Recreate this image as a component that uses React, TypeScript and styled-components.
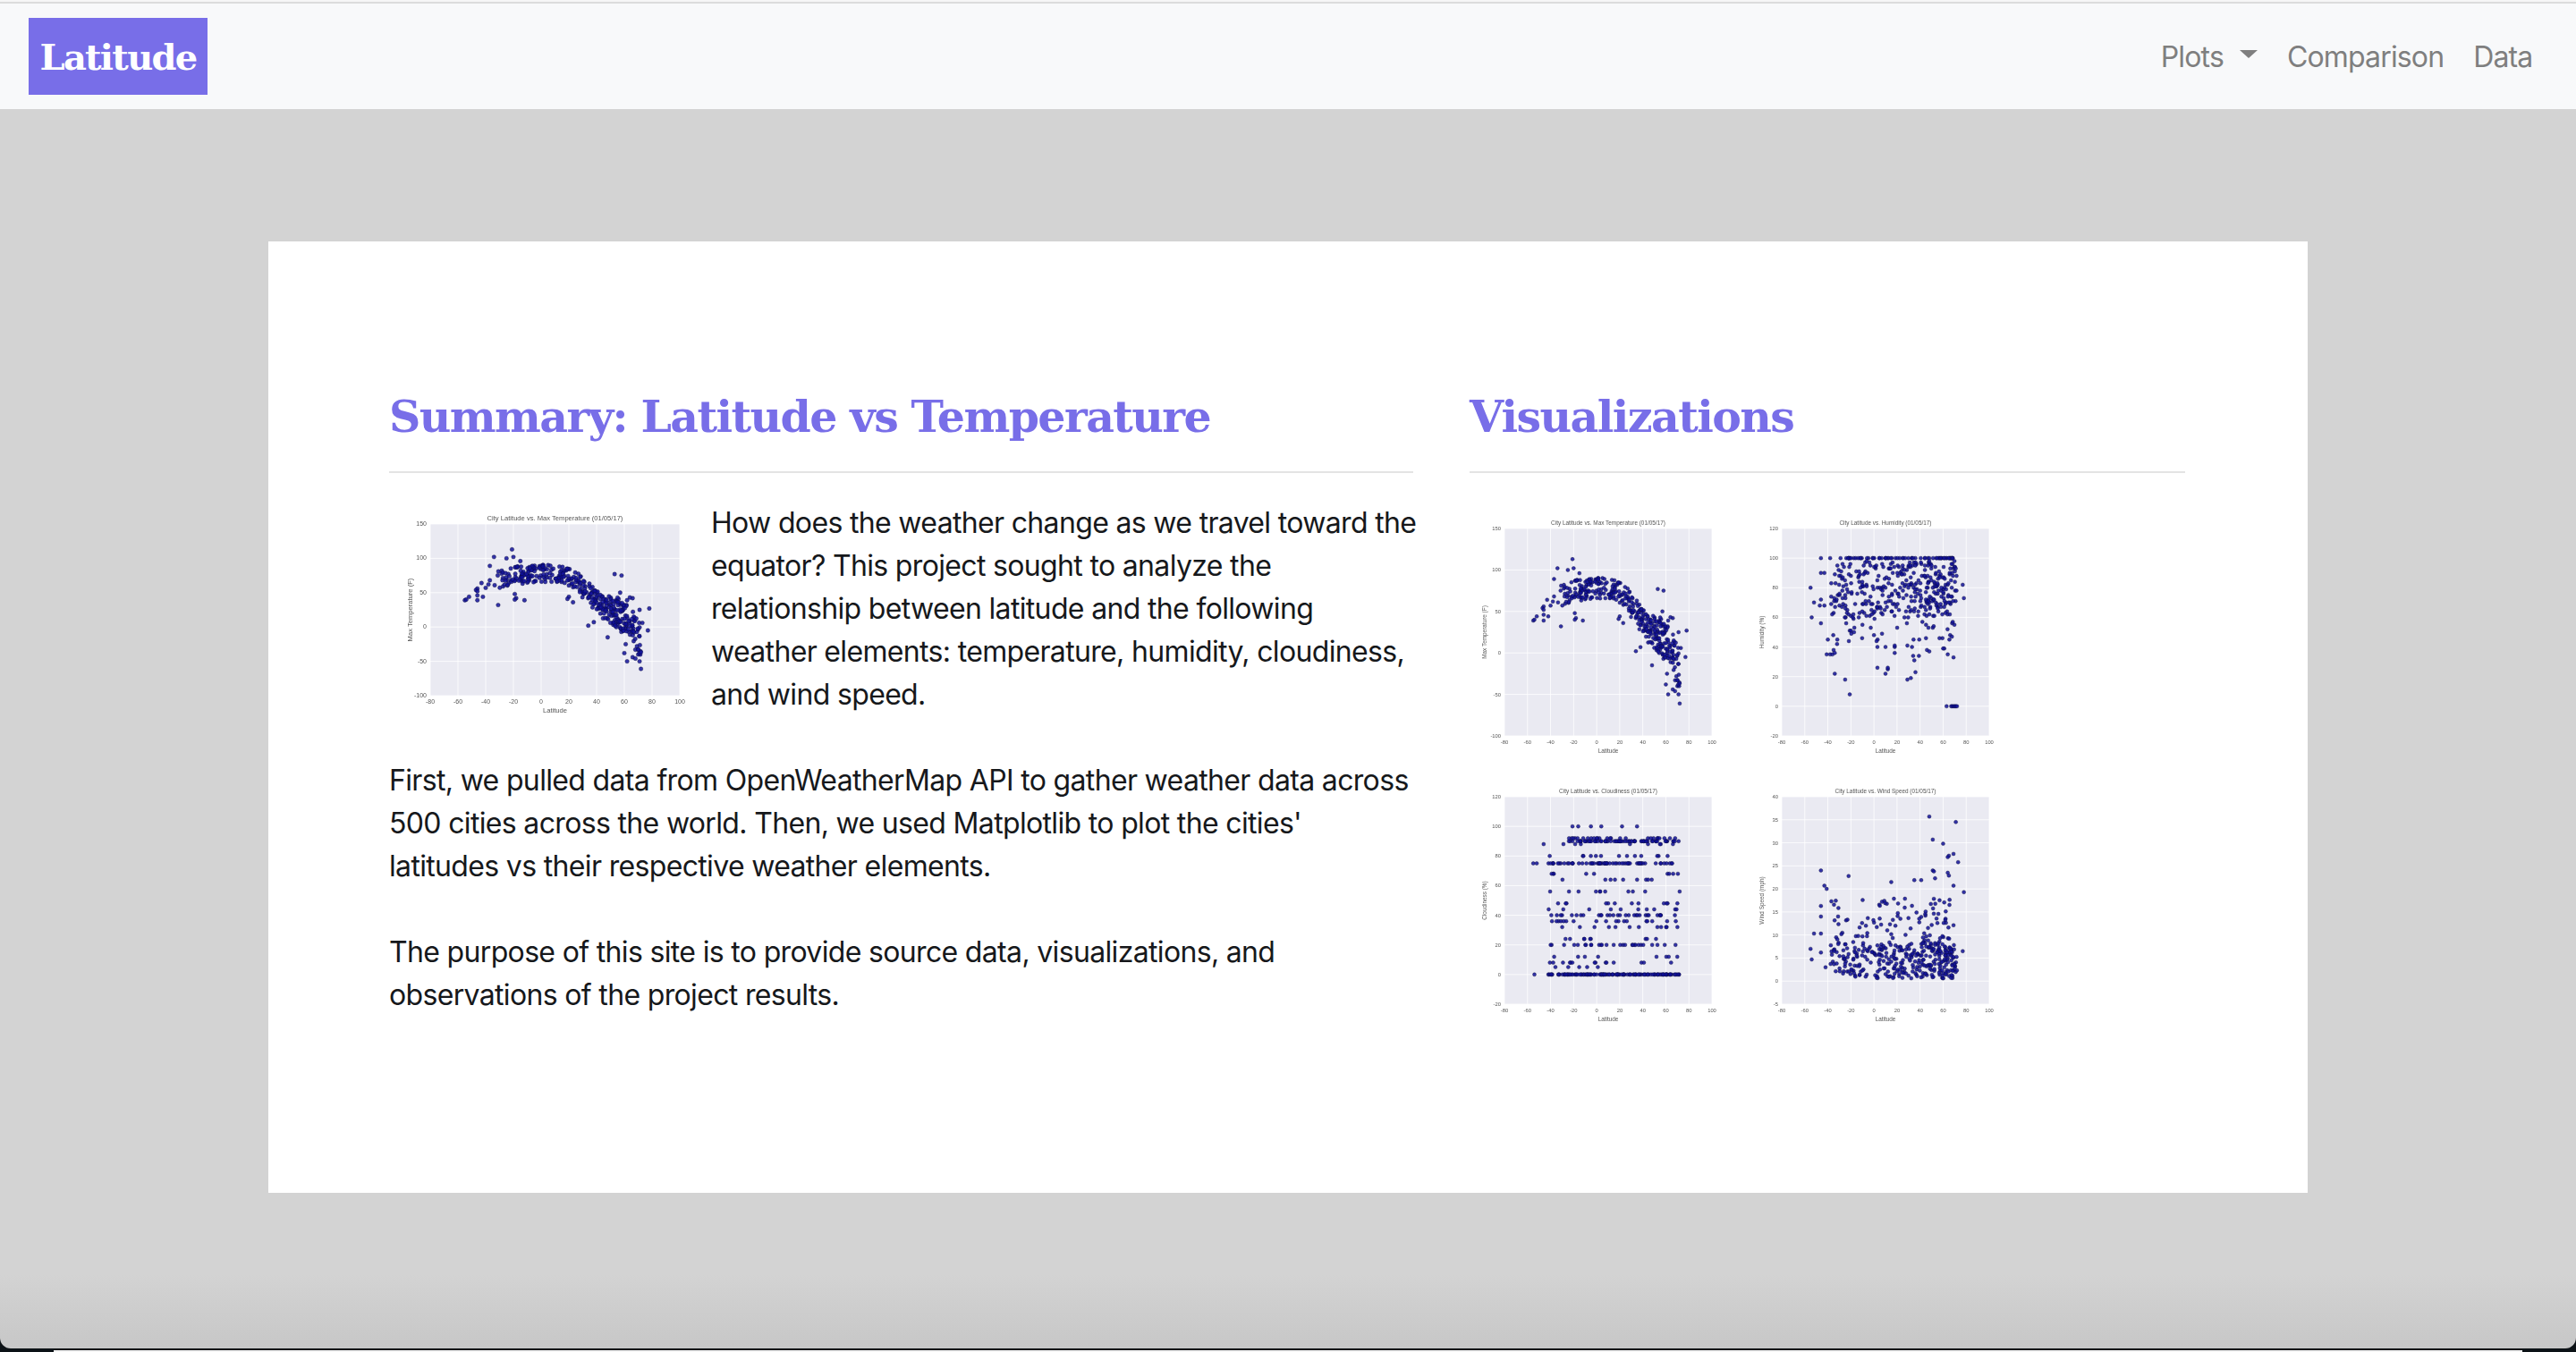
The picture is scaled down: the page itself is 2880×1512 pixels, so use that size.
import React from 'react';
import styled, { createGlobalStyle } from 'styled-components';

const GlobalStyle = createGlobalStyle`
  html, body {
    margin: 0;
    padding: 0;
    background: #0c1216;
  }
`;

const Page = styled.div`
  height: 1508px;
  display: flex;
  flex-direction: column;
  overflow: hidden;
  border-radius: 0 0 12px 12px;
  font-family: Inter, 'Noto Sans', sans-serif;
  letter-spacing: -0.66px;
  background: linear-gradient(to bottom, #d3d3d3 94.5%, #c7c7c7 100%);
`;

const BottomEdge = styled.div`
  height: 2px;
  margin: 2px 60px 0;
  background: #f4f4f4;
`;

const Navbar = styled.nav`
  height: 118px;
  margin-top: 4px;
  padding: 0 32px;
  display: flex;
  align-items: center;
  justify-content: space-between;
  background: #f8f9fa;
  box-shadow: 0 -2px 0 #dcdcdc, 0 -4px 0 #f6f6f6;
`;

const Brand = styled.a`
  width: 200px;
  height: 86px;
  display: flex;
  align-items: center;
  justify-content: center;
  background: #786ee8;
  color: #fff;
  font-family: 'DejaVu Serif', serif;
  font-weight: 700;
  font-size: 40px;
  letter-spacing: -1.7px;
`;

const NavList = styled.div`
  display: flex;
  align-items: center;
`;

const NavLink = styled.a`
  padding: 2px 16.5px 0;
  display: flex;
  align-items: center;
  color: #7f7f7f;
  font-size: 32px;
  line-height: 48px;
  letter-spacing: -0.85px;
`;

const Caret = styled.span`
  margin-left: 18px;
  margin-bottom: 8px;
  border-top: 9px solid #7f7f7f;
  border-left: 10px solid transparent;
  border-right: 10px solid transparent;
`;

const Panel = styled.main`
  margin: 148px 300px 0;
  height: 1064px;
  padding: 150px 137px 0 135px;
  box-sizing: border-box;
  background: #fff;
  display: grid;
  grid-template-columns: 1145px 800px;
  column-gap: 63px;
  align-items: start;
`;

const Heading = styled.h2`
  margin: 0;
  height: 94px;
  padding-top: 13px;
  border-bottom: 2px solid #e3e3e3;
  color: #786ee8;
  font-family: 'DejaVu Serif', serif;
  font-weight: 700;
  font-size: 49px;
  line-height: 66px;
  letter-spacing: -1.6px;
`;

const Body = styled.div`
  padding-top: 32px;
  color: #16181b;
  font-size: 32px;
  line-height: 48px;
`;

const Paragraph = styled.p<{ $overhang?: boolean }>`
  margin: 0 ${(p) => (p.$overhang ? '-9px' : '0')} 48px 0;
`;

const Thumb = styled.div`
  float: left;
  width: 340px;
  height: 260px;
  margin-right: 20px;
`;

const Gallery = styled.div`
  padding-top: 34px;
  display: grid;
  grid-template-columns: 310px 310px;
  grid-auto-rows: 300px;
`;

type Point = [number, number];

// small seeded generator so the scatter stays the same between runs
const makeRandom = (seed: number) => () => {
  seed = (seed * 1664525 + 1013904223) % 4294967296;
  return seed / 4294967296;
};

const interpolate = (table: Point[], x: number) => {
  for (let i = 1; i < table.length; i++) {
    if (x <= table[i][0]) {
      const [x0, y0] = table[i - 1];
      const [x1, y1] = table[i];
      return y0 + ((y1 - y0) * (x - x0)) / (x1 - x0);
    }
  }
  return table[table.length - 1][1];
};

const randomLat = (r: () => number, from = -38) => {
  const v = r();
  if (v < 0.45) return 20 + r() * 52;
  if (v < 0.6) return 40 + r() * 32;
  return from + r() * (20 - from);
};

const tempCurve: Point[] = [
  [-40, 62], [-30, 70], [-20, 75], [0, 78], [15, 78], [25, 66],
  [35, 47], [45, 27], [55, 20], [65, 4], [72, -20],
];

const temperature = (): Point[] => {
  const r = makeRandom(11);
  const pts: Point[] = [
    [-55, 39], [-54, 40], [-52, 44], [-46, 56], [-47, 54], [-46, 52], [-46, 46], [-46, 39],
    [-43, 64], [-42, 44], [-40, 57], [-38, 62], [-37, 68], [-37, 89], [-34, 102], [-31, 32],
    [-25, 100], [-20, 102], [-21, 113], [-19, 48], [-18, 42], [-19, 40], [-12, 39], [-15, 96],
    [53, 77], [58, 75], [57, 50], [78, 27], [77, -5], [72, -61], [71, -50], [34, 2], [38, 7],
    [48, -15], [73, 6], [71, 25], [66, 42], [64, 43], [62, 39], [20, 44], [19, 41], [23, 36],
    [62, -50], [66, -44], [68, -46], [70, -40], [68, -33], [60, -38], [61, -25],
  ];
  for (let i = 0; i < 370; i++) {
    const lat = randomLat(r, -35);
    const spread = lat > 48 ? 46 : lat > 25 ? 32 : 26;
    pts.push([lat, interpolate(tempCurve, lat) + (r() - 0.5) * spread]);
  }
  return pts;
};

const humidity = (): Point[] => {
  const r = makeRandom(29);
  const pts: Point[] = [
    [-55, 80], [-52, 70], [-54, 60], [-46, 100], [-46, 90], [-46, 72], [-47, 68], [-46, 56], [-43, 90],
    [-43, 68], [-40, 45], [-41, 35], [-38, 35], [-36, 35], [-35, 38], [-34, 36], [-32, 42],
    [-34, 22], [-25, 18], [-21, 8], [-21, 51], [-20, 51], [-17, 53], [-10, 55], [0, 48],
    [3, 26], [3, 40], [7, 49], [10, 40], [10, 22], [12, 25], [12, 26], [18, 36], [18, 40],
    [18, 41], [29, 18], [32, 19], [36, 23], [35, 31], [34, 34], [33, 40], [29, 41], [39, 34],
    [46, 38], [48, 37], [61, 39], [60, 39], [64, 35], [69, 33], [78, 73], [77, 82],
    [63, 0], [67, 0], [68, 0], [69, 0], [70, 0], [71, 0], [72, 0], [-38, 100], [-29, 100],
  ];
  for (let i = 0; i < 65; i++) pts.push([-25 + r() * 97, 100]);
  for (let i = 0; i < 380; i++) {
    const lat = randomLat(r);
    const val = r() < 0.9 ? 60 + r() * 38 : 44 + r() * 16;
    pts.push([lat, Math.round(val)]);
  }
  return pts;
};

const cloudiness = (): Point[] => {
  const r = makeRandom(47);
  const rows: [number, number][] = [
    [0, 120], [5, 5], [8, 14], [12, 8], [20, 28], [24, 9], [32, 12], [36, 18], [40, 30], [44, 10],
    [48, 12], [56, 11], [64, 9], [68, 9], [75, 62], [80, 13], [88, 8], [90, 70], [92, 26],
  ];
  const pts: Point[] = [[-21, 100], [-16, 100], [-5, 100], [4, 100], [22, 100], [35, 100], [-46, 88], [-55, 75], [-52, 75], [-54, 0]];
  rows.forEach(([val, count]) => {
    for (let i = 0; i < count; i++) {
      const from = val === 90 || val === 92 ? -25 : -42;
      pts.push([from + r() * (72 - from), val]);
    }
  });
  return pts;
};

const windSpeed = (): Point[] => {
  const r = makeRandom(83);
  const pts: Point[] = [
    [48, 35.7], [71, 34.5], [51, 30.7], [60, 29.8], [69, 27.6], [65, 27.2], [64, 26.9], [73, 25.8],
    [-46, 24], [51, 24], [52, 23.8], [64, 23.5], [65, 22.9], [-22, 22.8], [53, 22.3], [35, 21.9],
    [41, 21.9], [15, 21.5], [-43, 20.7], [-41, 20], [69, 20.7], [78, 19.3], [-55, 7], [-54, 4.7],
    [-52, 10.3], [-46, 16.3], [-46, 14], [-46, 10.3], [-46, 6.2], [-42, 3], [77, 6.5],
  ];
  for (let i = 0; i < 420; i++) {
    const lat = randomLat(r, -38);
    const val = r() < 0.66 ? 0.6 + r() * 7.4 : 6 + r() * 12;
    pts.push([lat, val]);
  }
  return pts;
};

interface ChartProps {
  title: string;
  yLabel: string;
  yMin: number;
  yMax: number;
  yStep: number;
  points: Point[];
  wide?: boolean;
}

const ticks = (min: number, max: number, step: number) => {
  const out: number[] = [];
  for (let v = min; v <= max; v += step) out.push(v);
  return out;
};

const Chart = ({ title, yLabel, yMin, yMax, yStep, points, wide }: ChartProps) => {
  const w = wide ? 340 : 310;
  const h = wide ? 260 : 300;
  const left = wide ? 46 : 39;
  const top = wide ? 25 : 28;
  const pw = wide ? 279 : 232;
  const ph = wide ? 192 : 232;
  const sx = (v: number) => left + ((v + 80) / 180) * pw;
  const sy = (v: number) => top + ((yMax - v) / (yMax - yMin)) * ph;
  const filterId = `soft-${title.length}-${w}`;
  const font = wide ? 7.6 : 6.4;
  return (
    <svg width={w} height={h} viewBox={`0 0 ${w} ${h}`} fontFamily="'Liberation Sans', sans-serif" fill="#555" letterSpacing="0">
      <defs>
        <filter id={filterId} x="-5%" y="-5%" width="110%" height="110%">
          <feGaussianBlur stdDeviation={wide ? 0.35 : 0.5} />
        </filter>
      </defs>
      <g filter={`url(#${filterId})`}>
        <rect x={left} y={top} width={pw} height={ph} fill="#eaeaf2" />
        {ticks(-80, 100, 20).map((v) => (
          <line key={v} x1={sx(v)} x2={sx(v)} y1={top} y2={top + ph} stroke="#fff" strokeWidth={0.8} />
        ))}
        {ticks(yMin, yMax, yStep).map((v) => (
          <line key={v} x1={left} x2={left + pw} y1={sy(v)} y2={sy(v)} stroke="#fff" strokeWidth={0.8} />
        ))}
        {points.map(([x, y], i) => (
          <circle key={i} cx={sx(x)} cy={sy(y)} r={wide ? 2.2 : 2} fill="#12129a" fillOpacity={0.85} stroke="#0a0a3a" strokeWidth={0.4} />
        ))}
        <text x={left + pw / 2} y={top - 4} textAnchor="middle" fontSize={font}>{title}</text>
        {ticks(-80, 100, 20).map((v) => (
          <text key={v} x={sx(v)} y={top + ph + 9} textAnchor="middle" fontSize={font - 0.6}>{v}</text>
        ))}
        {ticks(yMin, yMax, yStep).map((v) => (
          <text key={v} x={left - 4} y={sy(v) + 2} textAnchor="end" fontSize={font - 0.6}>{v}</text>
        ))}
        <text x={left + pw / 2} y={top + ph + 19} textAnchor="middle" fontSize={font}>Latitude</text>
        <text
          transform={`translate(${left - 20} ${top + ph / 2}) rotate(-90)`}
          textAnchor="middle"
          fontSize={font}
        >
          {yLabel}
        </text>
      </g>
    </svg>
  );
};

const tempPoints = temperature();
const humidityPoints = humidity();
const cloudPoints = cloudiness();
const windPoints = windSpeed();

const tempTitle = 'City Latitude vs. Max Temperature (01/05/17)';

export default function App() {
  return (
    <>
      <GlobalStyle />
      <Page>
        <Navbar>
          <Brand>Latitude</Brand>
          <NavList>
            <NavLink>Plots<Caret /></NavLink>
            <NavLink>Comparison</NavLink>
            <NavLink>Data</NavLink>
          </NavList>
        </Navbar>
        <Panel>
          <section>
            <Heading>Summary: Latitude vs Temperature</Heading>
            <Body>
              <Thumb>
                <Chart wide title={tempTitle} yLabel="Max Temperature (F)" yMin={-100} yMax={150} yStep={50} points={tempPoints} />
              </Thumb>
              <Paragraph $overhang>
                How does the weather change as we travel toward the equator? This project sought to analyze the relationship between latitude and the following weather elements: temperature, humidity, cloudiness, and wind speed.
              </Paragraph>
              <Paragraph>
                First, we pulled data from OpenWeatherMap API to gather weather data across 500 cities across the world. Then, we used Matplotlib to plot the cities' latitudes vs their respective weather elements.
              </Paragraph>
              <Paragraph>
                The purpose of this site is to provide source data, visualizations, and observations of the project results.
              </Paragraph>
            </Body>
          </section>
          <section>
            <Heading>Visualizations</Heading>
            <Gallery>
              <Chart title={tempTitle} yLabel="Max Temperature (F)" yMin={-100} yMax={150} yStep={50} points={tempPoints} />
              <Chart title="City Latitude vs. Humidity (01/05/17)" yLabel="Humidity (%)" yMin={-20} yMax={120} yStep={20} points={humidityPoints} />
              <Chart title="City Latitude vs. Cloudiness (01/05/17)" yLabel="Cloudiness (%)" yMin={-20} yMax={120} yStep={20} points={cloudPoints} />
              <Chart title="City Latitude vs. Wind Speed (01/05/17)" yLabel="Wind Speed (mph)" yMin={-5} yMax={40} yStep={5} points={windPoints} />
            </Gallery>
          </section>
        </Panel>
      </Page>
      <BottomEdge />
    </>
  );
}
